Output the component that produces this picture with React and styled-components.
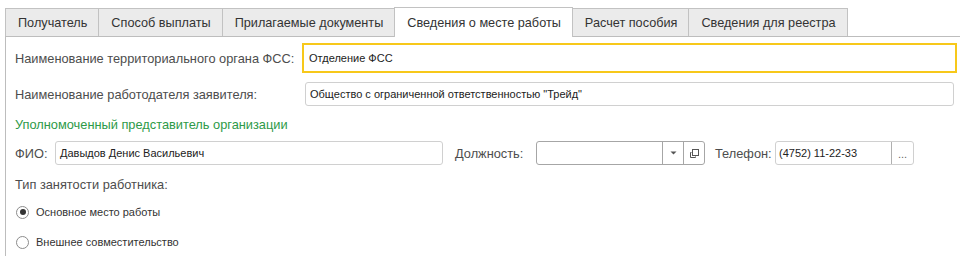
import React from "react";
import styled, { createGlobalStyle } from "styled-components";

const Global = createGlobalStyle`
  html, body { margin: 0; padding: 0; background: #fff; }
  body { font-family: "Liberation Sans", Arial, sans-serif; overflow: hidden; }
`;

const Page = styled.div`
  padding: 7px 0 0 5px;
  width: 955px;
  height: 249px;
`;

const TabBar = styled.div`
  display: flex;
  align-items: flex-end;
  position: relative;
  z-index: 1;
  margin-bottom: -1px;
`;

const Tab = styled.div`
  box-sizing: border-box;
  height: ${(p) => (p.$active ? "30px" : "28px")};
  margin-bottom: ${(p) => (p.$active ? "0" : "1px")};
  margin-left: -1px;
  &:first-child { margin-left: 0; }
  padding: 0 11px 0 12px;
  display: flex;
  align-items: center;
  font-size: 12.7px;
  color: #333;
  background: ${(p) => (p.$active ? "#fff" : "#ebebeb")};
  border: 1px solid #c2c2c2;
  border-bottom: none;
  white-space: nowrap;
  position: relative;
  z-index: ${(p) => (p.$active ? 2 : 1)};
`;

const Panel = styled.div`
  border-top: 1px solid #bdbdbd;
  border-left: 1px solid #bdbdbd;
  height: 230px;
  padding: 6px 0 0 9px;
  box-sizing: border-box;
`;

const Row = styled.div`
  display: flex;
  align-items: center;
  height: ${(p) => p.$h || 24}px;
  margin-top: ${(p) => p.$mt || 0}px;
`;

const Label = styled.div`
  font-size: 12.8px;
  color: #4d4d4d;
  white-space: nowrap;
  width: ${(p) => (p.$w ? p.$w + "px" : "auto")};
  margin-left: ${(p) => p.$ml || 0}px;
  flex: none;
`;

const GroupTitle = styled.div`
  font-size: 12.8px;
  line-height: 16px;
  height: 16px;
  color: #2d9a48;
  margin-top: ${(p) => p.$mt || 0}px;
`;

const Caption = styled.div`
  font-size: 12.8px;
  line-height: 16px;
  height: 16px;
  color: #4d4d4d;
  margin-top: ${(p) => p.$mt || 0}px;
`;

const Field = styled.div`
  box-sizing: border-box;
  height: ${(p) => (p.$focused ? 30 : 24)}px;
  border: ${(p) => (p.$focused ? "2px solid #f7c81a" : `1px solid ${p.$dark ? "#a6a6a6" : "#d0d0d0"}`)};
  border-radius: ${(p) => (p.$focused ? 0 : 3)}px;
  background: #fff;
  display: flex;
  align-items: stretch;
  flex: ${(p) => (p.$w ? "none" : "1")};
  width: ${(p) => (p.$w ? p.$w + "px" : "auto")};
  margin: ${(p) => p.$margin || "0"};
  overflow: hidden;
`;

const Value = styled.div`
  flex: 1;
  display: flex;
  align-items: center;
  padding-left: ${(p) => p.$pl ?? 4}px;
  font-size: 11px;
  color: #222;
  white-space: nowrap;
  overflow: hidden;
`;

const FieldButton = styled.div`
  flex: none;
  width: ${(p) => p.$w || 21}px;
  border-left: 1px solid ${(p) => p.$line || "#a6a6a6"};
  display: flex;
  align-items: ${(p) => p.$align || "center"};
  justify-content: center;
  color: #666;
  font-size: 11px;
  box-sizing: border-box;
  padding-bottom: ${(p) => p.$pb || 0}px;
`;

const RadioRow = styled.label`
  display: flex;
  align-items: center;
  height: 16px;
  margin-top: ${(p) => p.$mt || 0}px;
  padding-left: 1px;
  gap: 7px;
  font-size: 11px;
  color: #333;
`;

const RadioCircle = styled.span`
  box-sizing: border-box;
  width: 13px;
  height: 13px;
  border-radius: 50%;
  border: 1px solid #8c8c8c;
  background: #fff;
  display: flex;
  align-items: center;
  justify-content: center;
  flex: none;
  &::after {
    content: "";
    display: ${(p) => (p.$checked ? "block" : "none")};
    width: 6px;
    height: 6px;
    border-radius: 50%;
    background: #333;
  }
`;

const tabs = [
  "Получатель",
  "Способ выплаты",
  "Прилагаемые документы",
  "Сведения о месте работы",
  "Расчет пособия",
  "Сведения для реестра",
];

export default function App() {
  return (
    <>
      <Global />
      <Page>
        <TabBar>
          {tabs.map((t, i) => (
            <Tab key={t} $active={i === 3}>
              {t}
            </Tab>
          ))}
        </TabBar>
        <Panel>
          <Row $h={30}>
            <Label $w={287}>Наименование территориального органа ФСС:</Label>
            <Field $focused $margin="0 3px 0 0">
              <Value $pl={5}>Отделение ФСС</Value>
            </Field>
          </Row>
          <Row $mt={9}>
            <Label $w={287}>Наименование работодателя заявителя:</Label>
            <Field $margin="0 6px 0 3px">
              <Value>Общество с ограниченной ответственностью "Трейд"</Value>
            </Field>
          </Row>
          <GroupTitle $mt={11}>Уполномоченный представитель организации</GroupTitle>
          <Row $mt={8}>
            <Label $w={40}>ФИО:</Label>
            <Field $w={388}>
              <Value>Давыдов Денис Васильевич</Value>
            </Field>
            <Label $w={81} $ml={12}>Должность:</Label>
            <Field $w={169} $dark>
              <Value />
              <FieldButton $w={21}>
                <svg width="7" height="4" viewBox="0 0 7 4">
                  <path d="M0.5 0.5 H6.5 L3.5 3.5 Z" fill="#555" />
                </svg>
              </FieldButton>
              <FieldButton $w={21}>
                <svg width="11" height="11" viewBox="0 0 11 11" fill="none" stroke="#555" strokeWidth="1">
                  <rect x="3.5" y="1.5" width="6" height="6" />
                  <path d="M2.5 4.5 H1.5 V9.5 H6.5 V8.5" />
                </svg>
              </FieldButton>
            </Field>
            <Label $w={60} $ml={10}>Телефон:</Label>
            <Field $w={139}>
              <Value $pl={3}>(4752) 11-22-33</Value>
              <FieldButton $w={22} $line="#b0b0b0" $align="flex-end" $pb={4}>
                ...
              </FieldButton>
            </Field>
          </Row>
          <Caption $mt={12}>Тип занятости работника:</Caption>
          <RadioRow $mt={11}>
            <RadioCircle $checked />
            Основное место работы
          </RadioRow>
          <RadioRow $mt={14}>
            <RadioCircle />
            Внешнее совместительство
          </RadioRow>
        </Panel>
      </Page>
    </>
  );
}
